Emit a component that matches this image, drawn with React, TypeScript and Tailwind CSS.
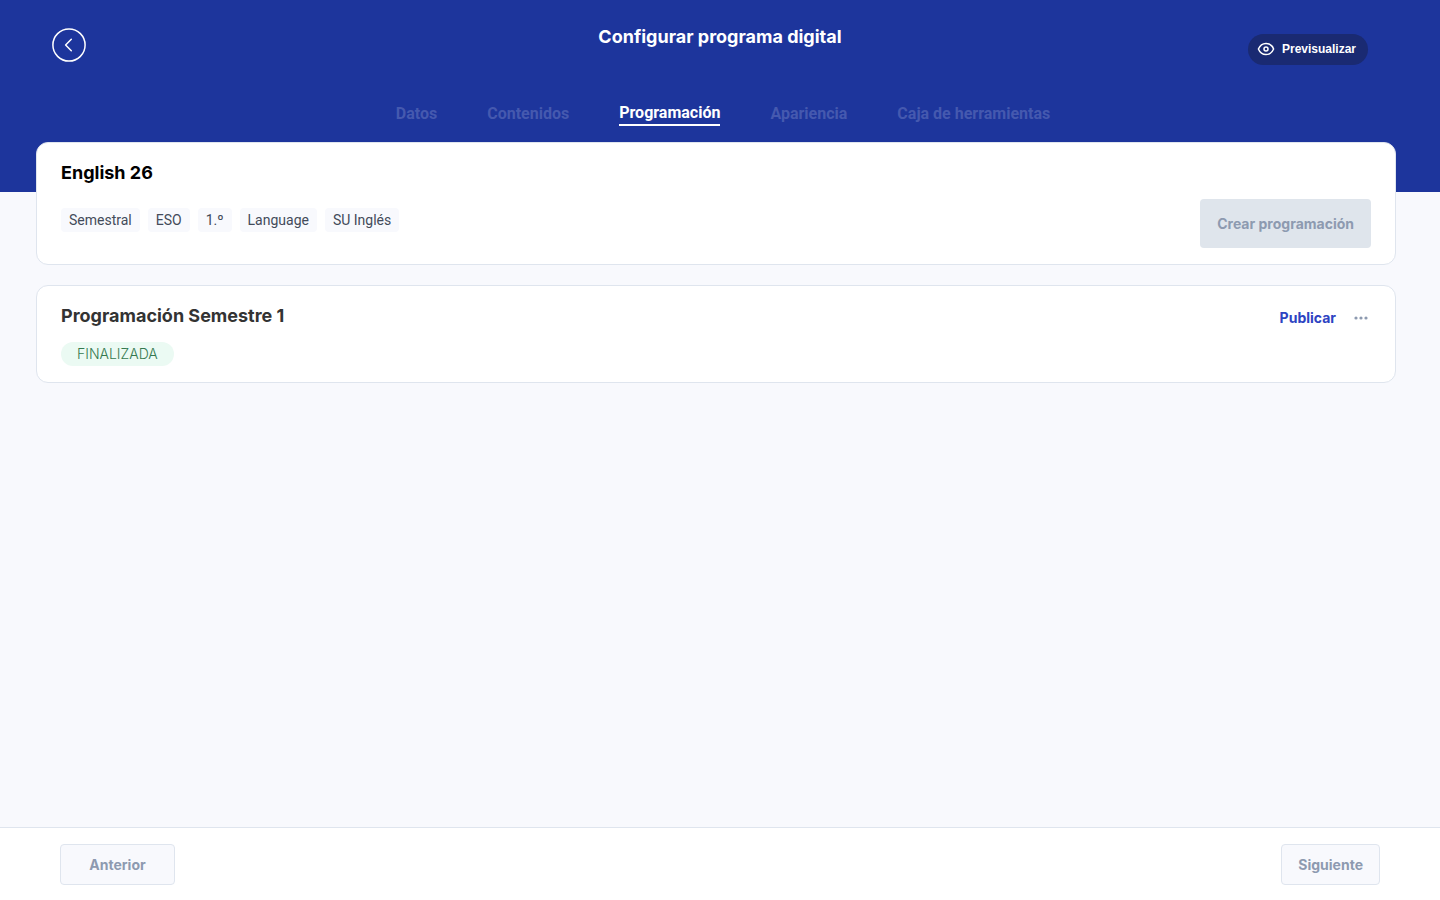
import React from "react";

const tabs = [
  { label: "Datos", active: false },
  { label: "Contenidos", active: false },
  { label: "Programación", active: true },
  { label: "Apariencia", active: false },
  { label: "Caja de herramientas", active: false },
];

const tags = ["Semestral", "ESO", "1.º", "Language", "SU Inglés"];

function BackIcon() {
  return (
    <svg width="34" height="34" viewBox="0 0 34 34" fill="none" stroke="currentColor" strokeWidth="1.5" strokeLinecap="round" strokeLinejoin="round" aria-hidden="true">
      <circle cx="17" cy="17" r="16.1" />
      <path d="M19.3 11.2 13.6 17l5.7 5.8" />
    </svg>
  );
}

function EyeIcon() {
  return (
    <svg width="18" height="18" viewBox="0 0 18 18" fill="none" stroke="currentColor" strokeWidth="1.5" aria-hidden="true">
      <path d="M1.4 9C2.9 5.4 5.7 3.4 9 3.4S15.1 5.4 16.6 9C15.1 12.6 12.3 14.6 9 14.6S2.9 12.6 1.4 9Z" strokeLinejoin="round" />
      <circle cx="9" cy="9" r="2" />
    </svg>
  );
}

function DotsIcon() {
  return (
    <svg width="16" height="16" viewBox="0 0 16 16" fill="currentColor" aria-hidden="true">
      <circle cx="3" cy="8" r="1.6" />
      <circle cx="8" cy="8" r="1.6" />
      <circle cx="13" cy="8" r="1.6" />
    </svg>
  );
}

function Header() {
  return (
    <header className="h-48 bg-[#1d359c] text-white">
      <div className="grid h-24 grid-cols-[1fr_auto_1fr] items-start px-13 pt-6">
        <a href="#volver" aria-label="Volver" className="mt-1 justify-self-start">
          <BackIcon />
        </a>
        <h1 className="text-lg leading-[26px] font-bold">Configurar programa digital</h1>
        <button
          type="button"
          className="mt-[10px] mr-5 flex h-[31px] items-center gap-[7px] justify-self-end rounded-full bg-[#1a2a72] pr-3 pb-[2px] pl-[9px] font-['Liberation_Sans',sans-serif] text-xs font-bold"
        >
          <EyeIcon />
          Previsualizar
        </button>
      </div>
      <nav aria-label="Pasos" className="flex items-start justify-center gap-[50px] pt-[6px] pl-[6px] font-['Roboto',sans-serif] text-base leading-[22px] font-bold">
        {tabs.map((tab) => (
          <a
            key={tab.label}
            href={"#" + tab.label}
            aria-current={tab.active ? "step" : undefined}
            className={tab.active ? "border-b-2 border-white" : "pt-px text-[#4559af]"}
          >
            {tab.label}
          </a>
        ))}
      </nav>
    </header>
  );
}

function ProgramCard() {
  return (
    <section className="rounded-xl border border-[#dfe5ee] bg-white px-6 pt-4 pb-4">
      <h2 className="text-lg leading-7 font-bold text-black">English 26</h2>
      <div className="mt-3 flex items-start justify-between">
        <ul className="mt-[9px] flex gap-2 font-['Roboto',sans-serif] text-sm leading-6 text-[#434b5a]">
          {tags.map((tag) => (
            <li key={tag} className="rounded bg-[#f8f9fd] px-2">
              {tag}
            </li>
          ))}
        </ul>
        <button type="button" disabled className="h-[49px] rounded bg-[#dfe5ec] px-[17px] text-sm font-bold text-[#8d9ab0]">
          Crear programación
        </button>
      </div>
    </section>
  );
}

function ScheduleCard() {
  return (
    <section className="flex items-start justify-between rounded-xl border border-[#dfe5ee] bg-white px-6 py-4">
      <div>
        <h2 className="text-lg leading-7 font-bold text-[#333333]">Programación Semestre 1</h2>
        <span className="mt-3 inline-block rounded-full bg-[#ebfaf3] px-4 text-sm leading-6 font-light text-[#34794f]">
          FINALIZADA
        </span>
      </div>
      <div className="mt-1 mr-[2px] flex items-center gap-[17px]">
        <button type="button" className="text-sm leading-6 font-bold text-[#2d43c2]">
          Publicar
        </button>
        <button type="button" aria-label="Más opciones" className="text-[#8d9ab0]">
          <DotsIcon />
        </button>
      </div>
    </section>
  );
}

function Footer() {
  return (
    <footer className="flex items-start justify-between border-t border-[#dfe5ee] bg-white px-[60px] pt-4 pb-[15px] text-sm font-bold text-[#8d9ab0]">
      <button type="button" disabled className="h-[41px] min-w-[115px] rounded border border-[#dfe5ee] bg-[#f8f9fd] px-4">
        Anterior
      </button>
      <button type="button" disabled className="h-[41px] rounded border border-[#dfe5ee] bg-[#f8f9fd] px-4">
        Siguiente
      </button>
    </footer>
  );
}

export default function App() {
  return (
    <div className="flex min-h-screen flex-col bg-[#f8f9fd] font-['Inter',sans-serif]">
      <Header />
      <main className="-mt-[50px] flex grow flex-col gap-5 pr-11 pl-9">
        <ProgramCard />
        <ScheduleCard />
      </main>
      <Footer />
    </div>
  );
}
